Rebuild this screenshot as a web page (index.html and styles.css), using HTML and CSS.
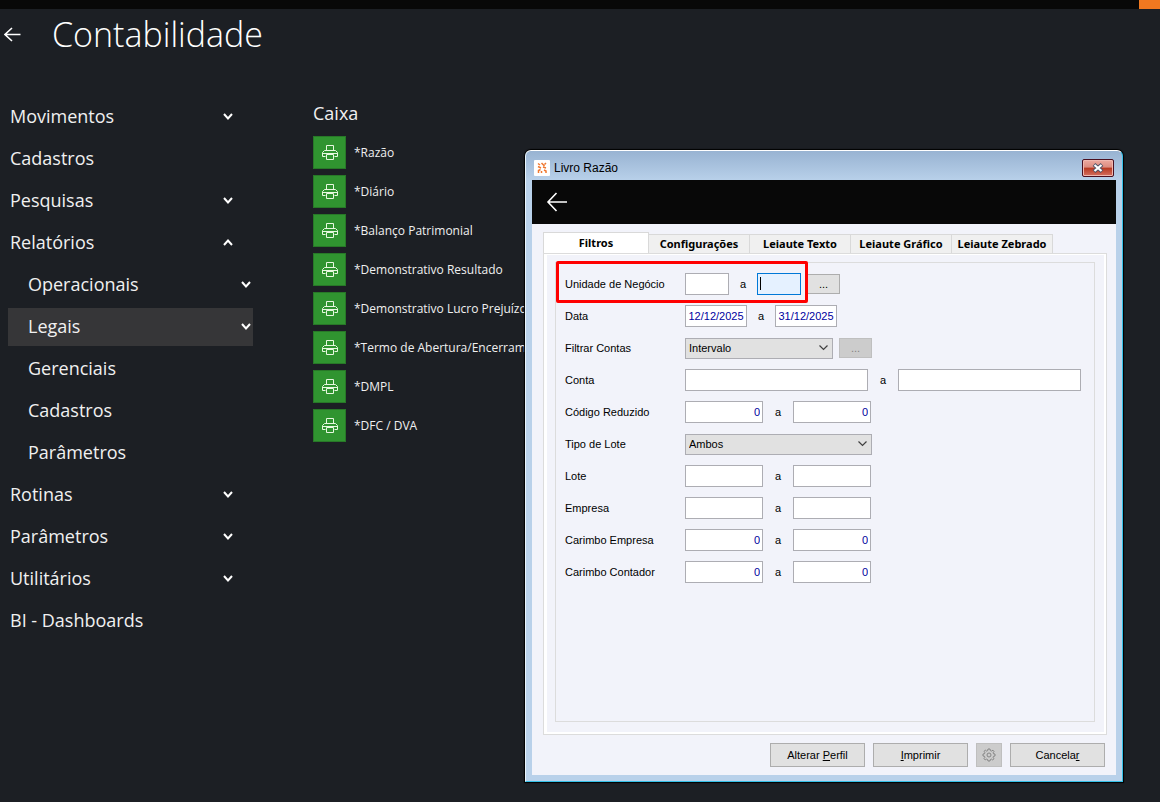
FILE: index.html
```html
<!DOCTYPE html>
<html lang="pt-BR">

<head>
    <meta charset="UTF-8">
    <title>Contabilidade</title>
    <link rel="stylesheet" href="styles.css">
</head>

<body>
    <svg class="sprite" aria-hidden="true">
        <symbol id="icon-printer" viewBox="0 0 16 16">
            <path d="M4.500 5.500v-5h7v5M3.500 11.500h-3v-4l2-2h11l2 2v4h-3M4.500 9.500v5h7v-5zM1 8.500h14" />
        </symbol>
        <symbol id="icon-chevron" viewBox="0 0 10 7">
            <path d="M1 1l4 4.500l4-4.500" />
        </symbol>
    </svg>

    <div class="top-bar">
        <span class="top-bar-accent"></span>
    </div>

    <header class="page-header">
        <button type="button" class="back-button" aria-label="Voltar">
            <svg width="17" height="15" viewBox="0 0 17 15">
                <path d="M8 1L1 7.500l7 6.500M1 7.500h15.500" />
            </svg>
        </button>
        <h1>Contabilidade</h1>
    </header>

    <main class="page-content">
        <nav class="side-menu">
            <a href="#" class="menu-item">Movimentos<svg class="chevron"><use href="#icon-chevron" /></svg></a>
            <a href="#" class="menu-item">Cadastros</a>
            <a href="#" class="menu-item">Pesquisas<svg class="chevron"><use href="#icon-chevron" /></svg></a>
            <a href="#" class="menu-item">Relatórios<svg class="chevron up"><use href="#icon-chevron" /></svg></a>
            <a href="#" class="menu-item sub">Operacionais<svg class="chevron"><use href="#icon-chevron" /></svg></a>
            <a href="#" class="menu-item sub selected">Legais<svg class="chevron"><use href="#icon-chevron" /></svg></a>
            <a href="#" class="menu-item sub">Gerenciais</a>
            <a href="#" class="menu-item sub">Cadastros</a>
            <a href="#" class="menu-item sub">Parâmetros</a>
            <a href="#" class="menu-item">Rotinas<svg class="chevron"><use href="#icon-chevron" /></svg></a>
            <a href="#" class="menu-item">Parâmetros<svg class="chevron"><use href="#icon-chevron" /></svg></a>
            <a href="#" class="menu-item">Utilitários<svg class="chevron"><use href="#icon-chevron" /></svg></a>
            <a href="#" class="menu-item">BI - Dashboards</a>
        </nav>

        <section class="reports">
            <h2>Caixa</h2>
            <a href="#" class="report"><span class="report-icon"><svg><use href="#icon-printer" /></svg></span>*Razão</a>
            <a href="#" class="report"><span class="report-icon"><svg><use href="#icon-printer" /></svg></span>*Diário</a>
            <a href="#" class="report"><span class="report-icon"><svg><use href="#icon-printer" /></svg></span>*Balanço Patrimonial</a>
            <a href="#" class="report"><span class="report-icon"><svg><use href="#icon-printer" /></svg></span>*Demonstrativo Resultado</a>
            <a href="#" class="report"><span class="report-icon"><svg><use href="#icon-printer" /></svg></span>*Demonstrativo Lucro Prejuízo</a>
            <a href="#" class="report"><span class="report-icon"><svg><use href="#icon-printer" /></svg></span>*Termo de Abertura/Encerrame</a>
            <a href="#" class="report"><span class="report-icon"><svg><use href="#icon-printer" /></svg></span>*DMPL</a>
            <a href="#" class="report"><span class="report-icon"><svg><use href="#icon-printer" /></svg></span>*DFC / DVA</a>
        </section>
    </main>

    <div class="window" role="dialog" aria-labelledby="windowTitle">
        <div class="title-bar">
            <svg class="app-icon" width="16" height="16" viewBox="0 0 16 16">
                <rect width="16" height="16" rx="1" fill="#fff" stroke="none" />
                <path d="M4 3.500l2 1.500M7.500 3l3 3M10.500 4.500l1.500-1.500M4 6.500l3 1.500M9 7l3 1M4.500 13v-2.500l2-1M7.500 13v-2M10 10l2 1v2" />
            </svg>
            <span id="windowTitle">Livro Razão</span>
            <button type="button" class="close-button" aria-label="Fechar">
                <svg width="12" height="10" viewBox="0 0 12 10">
                    <path class="x-edge" d="M2 1.500l8 7M10 1.500l-8 7" />
                    <path class="x-fill" d="M2.500 2l7 6M9.500 2l-7 6" />
                </svg>
            </button>
        </div>

        <div class="window-header">
            <button type="button" class="back-button" aria-label="Voltar">
                <svg width="22" height="20" viewBox="0 0 22 20">
                    <path d="M10.500 1L2 10l8.500 9M2 10h19" />
                </svg>
            </button>
        </div>

        <form class="window-body">
            <div class="tabs" role="tablist">
                <button type="button" role="tab" class="tab active" aria-selected="true">Filtros</button>
                <button type="button" role="tab" class="tab">Configurações</button>
                <button type="button" role="tab" class="tab">Leiaute Texto</button>
                <button type="button" role="tab" class="tab">Leiaute Gráfico</button>
                <button type="button" role="tab" class="tab">Leiaute Zebrado</button>
            </div>

            <div class="tab-page">
                <div class="filters">
                    <div class="row highlighted">
                        <label for="unidadeDe">Unidade de Negócio</label>
                        <input type="text" id="unidadeDe" class="code">
                        <span class="to short">a</span>
                        <span class="caret-field"><input type="text" id="unidadeAte" class="code current" aria-label="Unidade de Negócio até"></span>
                        <button type="button" class="more">...</button>
                    </div>
                    <div class="row">
                        <label for="dataDe">Data</label>
                        <input type="text" id="dataDe" class="date" value="12/12/2025">
                        <span class="to short">a</span>
                        <input type="text" class="date" value="31/12/2025" aria-label="Data até">
                    </div>
                    <div class="row">
                        <label for="filtrarContas">Filtrar Contas</label>
                        <select id="filtrarContas">
                            <option>Intervalo</option>
                        </select>
                        <button type="button" class="more" disabled>...</button>
                    </div>
                    <div class="row">
                        <label for="contaDe">Conta</label>
                        <input type="text" id="contaDe" class="account">
                        <span class="to">a</span>
                        <input type="text" class="account" aria-label="Conta até">
                    </div>
                    <div class="row">
                        <label for="reduzidoDe">Código Reduzido</label>
                        <input type="text" id="reduzidoDe" class="number" value="0">
                        <span class="to">a</span>
                        <input type="text" class="number" value="0" aria-label="Código Reduzido até">
                    </div>
                    <div class="row">
                        <label for="tipoLote">Tipo de Lote</label>
                        <select id="tipoLote" class="wide">
                            <option>Ambos</option>
                        </select>
                    </div>
                    <div class="row">
                        <label for="loteDe">Lote</label>
                        <input type="text" id="loteDe" class="number">
                        <span class="to">a</span>
                        <input type="text" class="number" aria-label="Lote até">
                    </div>
                    <div class="row">
                        <label for="empresaDe">Empresa</label>
                        <input type="text" id="empresaDe" class="number">
                        <span class="to">a</span>
                        <input type="text" class="number" aria-label="Empresa até">
                    </div>
                    <div class="row">
                        <label for="carimboEmpresaDe">Carimbo Empresa</label>
                        <input type="text" id="carimboEmpresaDe" class="number" value="0">
                        <span class="to">a</span>
                        <input type="text" class="number" value="0" aria-label="Carimbo Empresa até">
                    </div>
                    <div class="row">
                        <label for="carimboContadorDe">Carimbo Contador</label>
                        <input type="text" id="carimboContadorDe" class="number" value="0">
                        <span class="to">a</span>
                        <input type="text" class="number" value="0" aria-label="Carimbo Contador até">
                    </div>
                </div>
            </div>

            <div class="actions">
                <button type="button" class="action">Alterar <u>P</u>erfil</button>
                <button type="button" class="action"><u>I</u>mprimir</button>
                <button type="button" class="action settings" aria-label="Configurações" disabled>
                    <svg width="14" height="14" viewBox="0 0 14 14">
                        <path d="M6 1h2l.4 1.700 1 .4L11 2.200 12 3.500l-.9 1.300.4 1L13 6v2l-1.500.3-.4 1 .9 1.400-1.300 1.200-1.300-.8-1 .4L8 13H6l-.4-1.500-1-.4-1.400.8L2 10.700l.9-1.400-.4-1L1 8V6l1.500-.3.4-1L2 3.400 3.300 2.200l1.300.9 1-.4z" />
                        <circle cx="7" cy="7" r="2" />
                    </svg>
                </button>
                <button type="button" class="action">Cancela<u>r</u></button>
            </div>
        </form>
    </div>
</body>

</html>
```

FILE: styles.css
```css
:root {
    --page-color: #1c1f24;
    --bar-color: #080808;
    --accent-color: #f07820;
    --green-color: #309430;
    --form-color: #f2f3fa;
    --field-border: #adadb3;
    --button-color: #e1e1e1;
    --value-color: #0000a0;
    --highlight-color: #ff0000;
}

*,
*::before,
*::after {
    box-sizing: border-box;
}

body {
    margin: 0;
    min-height: 100vh;
    background-color: var(--page-color);
    color: #f0f0f0;
    font-family: "Open Sans", "Noto Sans", sans-serif;
}

a {
    color: inherit;
    text-decoration: none;
}

button,
input,
select {
    margin: 0;
    font: inherit;
    color: inherit;
}

.sprite {
    display: none;
}

.top-bar {
    display: flex;
    justify-content: flex-end;
    height: 9px;
    background-color: var(--bar-color);
}

.top-bar-accent {
    width: 21px;
    background-color: var(--accent-color);
}

.back-button {
    display: flex;
    padding: 0;
    border: none;
    background: none;
    color: #fff;
}

.back-button svg {
    fill: none;
    stroke: currentColor;
    stroke-width: 1.6;
}

.page-header {
    display: flex;
    align-items: center;
    gap: 31px;
    height: 50px;
    padding-left: 4px;
}

h1 {
    margin: 0;
    color: #fff;
    font-size: 34px;
    font-weight: 300;
    line-height: 50px;
}

.page-content {
    display: flex;
    gap: 60px;
    padding: 39px 0 0 8px;
}

.side-menu {
    width: 245px;
}

.menu-item {
    display: flex;
    align-items: center;
    justify-content: space-between;
    height: 38px;
    margin-bottom: 4px;
    padding: 0 20px 2px 2px;
    font-size: 18px;
    font-weight: 400;
    line-height: 36px;
}

.menu-item.sub {
    padding: 0 2px 2px 20px;
}

.menu-item.selected {
    background-color: #363638;
}

.chevron {
    width: 10px;
    height: 7px;
    fill: none;
    stroke: #fff;
    stroke-width: 2;
}

.chevron.up {
    transform: rotate(180deg);
}

h2 {
    margin: 0 0 8px;
    font-size: 18px;
    font-weight: 400;
    line-height: 30px;
}

.report {
    display: flex;
    align-items: center;
    gap: 8px;
    height: 33px;
    margin-bottom: 6px;
    font-size: 12px;
    white-space: nowrap;
}

.report-icon {
    display: flex;
    align-items: center;
    justify-content: center;
    width: 33px;
    height: 33px;
    border: 1px solid #287828;
    background-color: var(--green-color);
}

.report-icon svg {
    width: 16px;
    height: 16px;
    fill: none;
    stroke: #e8f8e0;
}

/* Report window */
.window {
    position: absolute;
    top: 150px;
    left: 525px;
    width: 598px;
    padding: 0 6px 6px;
    border: 1px solid #35c0e8;
    border-top-color: #fff;
    border-left-color: #e8f4fc;
    border-radius: 6px 6px 0 0;
    background: linear-gradient(#98b3d2, #b9d1ea 30px);
    box-shadow: 0 0 1px 1px #000;
    color: #000;
    font-family: "Liberation Sans", Arial, sans-serif;
    font-size: 11px;
}

.title-bar {
    display: flex;
    align-items: center;
    gap: 4px;
    height: 29px;
    padding: 5px 2px 0;
    font-size: 12px;
}

.app-icon {
    fill: none;
    stroke: #f07830;
    stroke-width: 1.5;
}

.close-button {
    display: flex;
    align-items: center;
    justify-content: center;
    width: 32px;
    height: 18px;
    margin-left: auto;
    padding: 0;
    border: 1px solid #4a1020;
    border-radius: 2px;
    background: linear-gradient(#eeaaa0, #dc8c80 45%, #b83820 50%, #d47060);
    box-shadow: inset 0 0 0 1px #f0b8b0;
}

.x-edge {
    stroke: #505468;
    stroke-width: 4;
}

.x-fill {
    stroke: #fff;
    stroke-width: 2.2;
}

.window-header {
    display: flex;
    align-items: center;
    height: 44px;
    padding-left: 14px;
    background-color: var(--bar-color);
}

.window-body {
    padding: 8px 9px 8px 11px;
    background-color: var(--form-color);
}

.tabs {
    display: flex;
    align-items: flex-end;
}

.tab {
    width: 101px;
    height: 19px;
    padding: 0;
    border: 1px solid #d9d9d9;
    border-width: 1px 1px 0 0;
    background-color: #f0f0f0;
    font-family: "Noto Sans", sans-serif;
    font-size: 11px;
    font-weight: 700;
    line-height: 18px;
    white-space: nowrap;
}

.tab.active {
    width: 106px;
    height: 21px;
    border-left-width: 1px;
    background-color: #fff;
}

.tab-page {
    height: 482px;
    padding: 8px 11px 12px;
    border: 1px solid #dcdcdc;
    box-shadow: inset 3px 0 #fff, inset -2px -2px #fff, inset 0 1px #fff;
}

.filters {
    display: flex;
    flex-direction: column;
    gap: 10px;
    height: 100%;
    padding: 10px 9px;
    border: 1px solid #dcdcdc;
}

.row {
    position: relative;
    display: flex;
    align-items: center;
    height: 22px;
}

.row label {
    width: 120px;
}

/* Red frame drawn over the business unit range */
.highlighted::after {
    content: "";
    position: absolute;
    top: -12px;
    left: -9px;
    width: 252px;
    height: 42px;
    border: 3px solid var(--highlight-color);
    border-radius: 2px;
    pointer-events: none;
}

.row input {
    height: 22px;
    padding: 0 2px;
    border: 1px solid var(--field-border);
    background-color: #fff;
    color: var(--value-color);
}

.row .code {
    width: 44px;
}

.row .current {
    border-color: #0078d7;
    background-color: #e5f1ff;
}

.caret-field {
    position: relative;
    display: flex;
}

.caret-field::after {
    content: "";
    position: absolute;
    top: 4px;
    left: 3px;
    width: 1px;
    height: 13px;
    background-color: #000;
}

.row .date {
    width: 62px;
    text-align: center;
}

.row .account {
    width: 183px;
}

.row .number {
    width: 78px;
    text-align: right;
}

.to {
    width: 30px;
    text-align: center;
}

.to.short {
    width: 28px;
}

.row select {
    width: 148px;
    height: 21px;
    padding: 0 3px;
    border: 1px solid var(--field-border);
    border-radius: 0;
    appearance: none;
    background: var(--button-color) url("data:image/svg+xml,%3Csvg xmlns='http://www.w3.org/2000/svg' width='9' height='6'%3E%3Cpath d='M.5.5l4 4 4-4' fill='none' stroke='%23404040' stroke-width='1.2'/%3E%3C/svg%3E") no-repeat right 4px center;
}

.row select.wide {
    width: 187px;
}

.more {
    width: 33px;
    height: 20px;
    margin-left: 6px;
    padding: 0;
    border: 1px solid #adadad;
    background-color: var(--button-color);
}

.more:disabled,
.action:disabled {
    border-color: #bfbfbf;
    background-color: #cccccc;
    color: #838383;
}

.actions {
    display: flex;
    justify-content: flex-end;
    gap: 8px;
    padding: 8px 2px 0 0;
}

.action {
    display: flex;
    align-items: center;
    justify-content: center;
    width: 95px;
    height: 24px;
    padding: 0;
    border: 1px solid #adadad;
    background-color: var(--button-color);
    white-space: pre;
}

.action.settings {
    width: 26px;
}

.settings svg {
    fill: none;
    stroke: #858585;
}
```
